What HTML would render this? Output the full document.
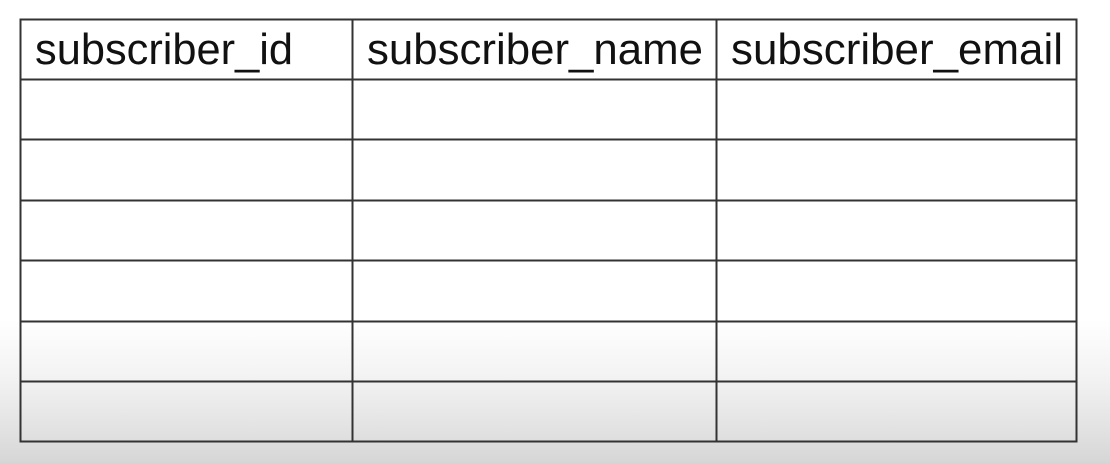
<!DOCTYPE html>
<html><head><meta charset="utf-8">
<style>
html,body{margin:0;padding:0;}
body{width:1110px;height:463px;overflow:hidden;background:linear-gradient(to bottom,#fff 0px,#fff 320px,#f2f2f2 380px,#e2e2e2 430px,#d6d6d6 463px);}
svg{position:absolute;left:0;top:0;}
text{font-family:"Liberation Sans",sans-serif;font-size:44px;fill:#111;}
</style></head>
<body>
<svg width="1110" height="463" viewBox="0 0 1110 463">
<g stroke="#333" stroke-width="2" fill="none">
<rect x="20.5" y="19.5" width="1056" height="422"/>
<line x1="352.5" y1="19" x2="352.5" y2="442"/>
<line x1="716.5" y1="19" x2="716.5" y2="442"/>
<line x1="20" y1="79.5" x2="1077" y2="79.5"/>
<line x1="20" y1="139.5" x2="1077" y2="139.5"/>
<line x1="20" y1="200.5" x2="1077" y2="200.5"/>
<line x1="20" y1="260.5" x2="1077" y2="260.5"/>
<line x1="20" y1="321.5" x2="1077" y2="321.5"/>
<line x1="20" y1="381.5" x2="1077" y2="381.5"/>
</g>
<text x="35" y="64" textLength="258" lengthAdjust="spacingAndGlyphs">subscriber_id</text>
<text x="367" y="64" textLength="336" lengthAdjust="spacingAndGlyphs">subscriber_name</text>
<text x="731" y="64" textLength="332" lengthAdjust="spacingAndGlyphs">subscriber_email</text>
</svg>
</body></html>
